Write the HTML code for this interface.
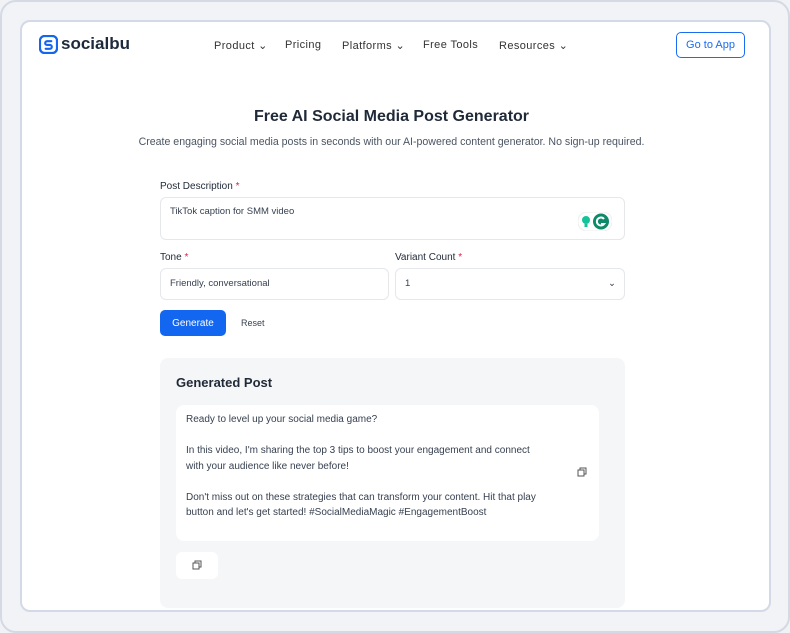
<!DOCTYPE html>
<html><head><meta charset="utf-8"><style>
*{box-sizing:border-box;margin:0;padding:0}
body{width:790px;height:633px;background:#f0f2f5;font-family:"Liberation Sans",sans-serif;color:#1f2937;overflow:hidden;position:relative}
.frame{position:absolute;left:0;top:0;width:790px;height:633px;border:2px solid #d4d9e3;border-radius:16px;background:#f1f3f6}
.page{position:absolute;left:20px;top:20px;width:751px;height:592px;background:#fff;border:2px solid #d3d9e6;border-radius:10px;overflow:hidden}
.logo{position:absolute;left:17px;top:12px;display:flex;align-items:center;gap:3px;font-size:17px;font-weight:bold;color:#1e2a3b}
.nav{position:absolute;top:17px;font-size:11px;color:#333;letter-spacing:.4px}
.btn-app{position:absolute;left:654px;top:10px;width:69px;height:26px;border:1px solid #1a6cf0;border-radius:5px;color:#1a6cf0;font-size:11px;text-align:center;line-height:24px}
h1{position:absolute;top:86px;left:-4px;width:100%;text-align:center;font-size:16px;font-weight:bold;color:#1f2937}
.sub{position:absolute;top:114px;left:-4px;width:100%;text-align:center;font-size:10.6px;color:#4b5563}
.lbl{position:absolute;font-size:10px;color:#1f2937}
.lbl b{color:#e11d48;font-weight:normal}
.inp{position:absolute;border:1px solid #e5e7eb;border-radius:6px;font-size:9.5px;color:#374151;padding:0 9px}
.gen{position:absolute;left:138px;top:288px;width:66px;height:26px;background:#1366f0;color:#fff;border-radius:5px;font-size:10px;display:flex;align-items:center;justify-content:center}
.card{position:absolute;left:138px;top:336px;width:465px;height:250px;background:#f5f6f8;border-radius:8px}
.inner{position:absolute;left:16px;top:47px;width:423px;height:136px;background:#fff;border-radius:8px;padding:7px 10px;font-size:10px;line-height:15.5px;color:#374151}
</style></head><body>
<div class="frame"></div>
<div class="page">
<div class="logo"><svg width="19" height="19" viewBox="0 0 20 20"><rect x="1" y="1" width="18" height="18" rx="5" fill="none" stroke="#1366f0" stroke-width="2.4"/><path d="M13 6.5H8.5a2 2 0 0 0 0 4h3a2 2 0 0 1 0 4H7" fill="none" stroke="#1366f0" stroke-width="2.2" stroke-linecap="round"/></svg>socialbu</div>
<div class="nav" style="left:192px">Product ⌄</div>
<div class="nav" style="left:263px">Pricing</div>
<div class="nav" style="left:320px">Platforms ⌄</div>
<div class="nav" style="left:401px">Free Tools</div>
<div class="nav" style="left:477px">Resources ⌄</div>
<div class="btn-app">Go to App</div>
<h1>Free AI Social Media Post Generator</h1>
<div class="sub">Create engaging social media posts in seconds with our AI-powered content generator. No sign-up required.</div>
<div class="lbl" style="left:138px;top:159px">Post Description <b>*</b></div>
<div class="inp" style="left:138px;top:175px;width:465px;height:43px;padding-top:8px">TikTok caption for SMM video
<svg style="position:absolute;right:12px;top:14px" width="34" height="19" viewBox="0 0 34 19"><rect x="0" y="0" width="34" height="19" rx="9" fill="#fff" stroke="#eee"/><circle cx="8" cy="8" r="4" fill="#15c39a"/><rect x="6.5" y="12" width="3" height="3" fill="#15c39a"/><circle cx="23" cy="9.5" r="8" fill="#0d8a6a"/><path d="M26 7a4 4 0 1 0 0 5h-3" fill="none" stroke="#fff" stroke-width="2"/></svg></div>
<div class="lbl" style="left:138px;top:230px">Tone <b>*</b></div>
<div class="inp" style="left:138px;top:246px;width:229px;height:32px;line-height:30px">Friendly, conversational</div>
<div class="lbl" style="left:373px;top:230px">Variant Count <b>*</b></div>
<div class="inp" style="left:373px;top:246px;width:230px;height:32px;line-height:30px">1<span style="position:absolute;right:8px">⌄</span></div>
<div class="gen">Generate</div>
<div style="position:absolute;left:219px;top:296px;font-size:9px;color:#374151">Reset</div>
<div class="card">
<div style="position:absolute;left:16px;top:17px;font-size:13px;font-weight:bold;color:#1f2937">Generated Post</div>
<div class="inner">Ready to level up your social media game?<br><br>In this video, I'm sharing the top 3 tips to boost your engagement and connect<br>with your audience like never before!<br><br>Don't miss out on these strategies that can transform your content. Hit that play<br>button and let's get started! #SocialMediaMagic #EngagementBoost
<svg style="position:absolute;right:12px;top:62px" width="10" height="10" viewBox="0 0 10 10"><rect x="1" y="3" width="6" height="6" fill="none" stroke="#555"/><path d="M3 3V1h6v6H7" fill="none" stroke="#555"/></svg></div>
<div style="position:absolute;left:16px;top:194px;width:42px;height:27px;background:#fff;border-radius:6px"><svg style="position:absolute;left:16px;top:8px" width="10" height="10" viewBox="0 0 10 10"><rect x="1" y="3" width="6" height="6" fill="none" stroke="#555"/><path d="M3 3V1h6v6H7" fill="none" stroke="#555"/></svg></div>
</div>
</div>
</body></html>
